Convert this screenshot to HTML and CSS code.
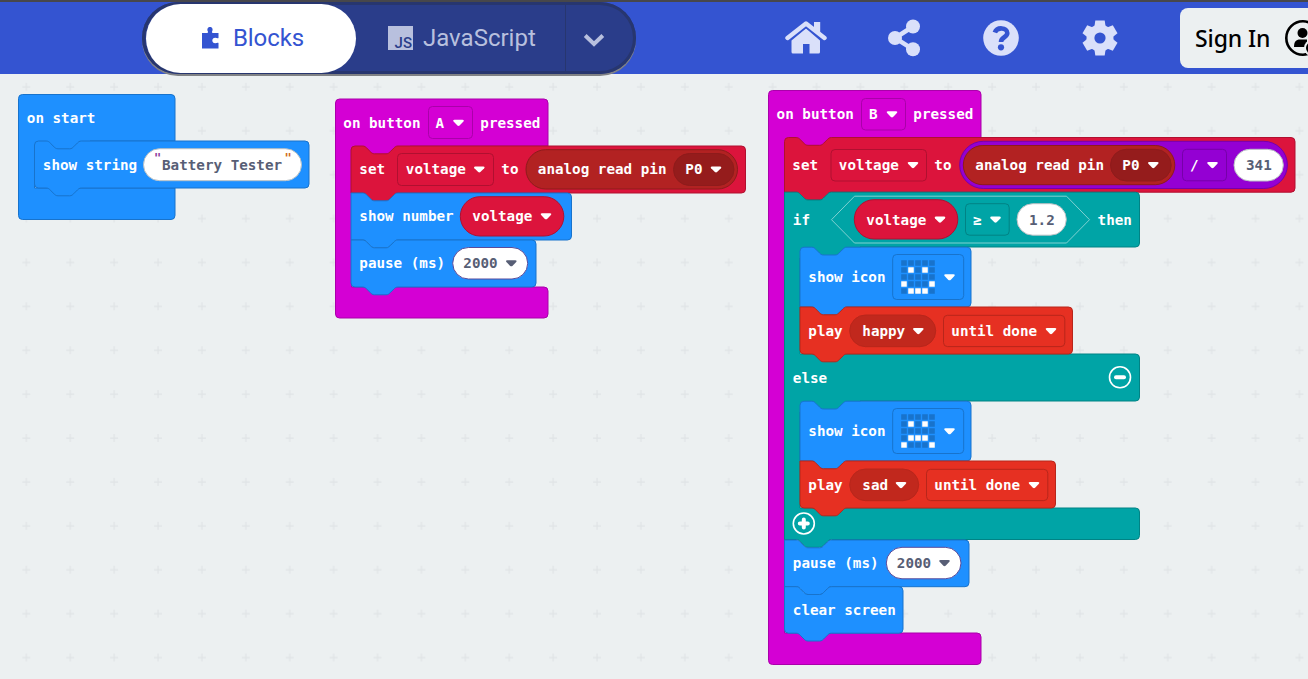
FILE: index.html
```html
<!DOCTYPE html>
<html lang="en">
<head>
<meta charset="utf-8">
<title>Blocks editor</title>
<link rel="stylesheet" href="styles.css">
</head>
<body>
<div class="app">
<header class="topbar">
  <div class="toggle">
    <button class="tab tab-active">
      <svg class="puzzle" viewBox="0 0 17 22"><path d="M0 6H5.500C6 5.500 6.200 5 5.800 4.300C4.700 2 6 0 8 0S11.300 2 10.200 4.300C9.800 5 10 5.500 10.500 6H16.500V11C15.500 11.700 14.500 10.700 13.300 10.700C9.300 10.700 9.300 16.300 13.300 16.300C14.500 16.300 15.500 15.300 16.500 16V21.500H0Z"/></svg>
      <span class="blocks-label">Blocks</span>
    </button>
    <button class="tab tab-js"><span class="js-badge">JS</span><span class="js-label">JavaScript</span></button>
    <button class="tab tab-more"><svg viewBox="0 0 22 14" width="22" height="14"><path d="M2.200 2.500 11 11 19.800 2.500" fill="none" stroke="#b8c0de" stroke-width="4"/></svg></button>
  </div>
  <nav class="tools">
    <svg class="tool" viewBox="0 0 42 36" width="42" height="36"><path d="M21 8.500 35 20.500V32Q35 33.500 33.500 33.500H24.500V24H18V33.500H8Q6.500 33.500 6.500 32V20.500Z"/><path d="M2.500 18 21 3.500 39.500 18" fill="none" stroke="#3454d1" stroke-width="7"/><path d="M2.500 18 21 3.500 39.500 18" fill="none" stroke="#dae0fa" stroke-width="4.400" stroke-linecap="round" stroke-linejoin="round"/><path d="M29 2H35.200V15L29 10Z"/></svg>
    <svg class="tool" viewBox="0 0 34 38" width="34" height="38"><circle cx="8" cy="19" r="7"/><circle cx="26" cy="7.500" r="7"/><circle cx="26" cy="30.300" r="7"/><path d="M26 7.500 8 19 26 30.300" fill="none" stroke="#dae0fa" stroke-width="4.500"/></svg>
    <svg class="tool" viewBox="0 0 36 36" width="36" height="36"><circle cx="18" cy="18" r="17.800"/><path d="M11.800 12.500C14 6.500 24.300 7.500 24.300 13C24.300 17.500 18 17 18 22" fill="none" stroke="#3454d1" stroke-width="4.600"/><circle cx="18" cy="27.300" r="3.100" fill="#3454d1"/></svg>
    <svg class="tool" viewBox="-18 -18 36 36" width="36" height="36"><circle r="13.500"/><g><path id="tooth" d="M-5.500-12 -4.700-17.500H4.700L5.500-12V0H-5.500Z"/><use href="#tooth" transform="rotate(60)"/><use href="#tooth" transform="rotate(120)"/><use href="#tooth" transform="rotate(180)"/><use href="#tooth" transform="rotate(240)"/><use href="#tooth" transform="rotate(300)"/></g><circle r="5.600" fill="#3454d1"/></svg>
  </nav>
  <button class="signin"><span>Sign In</span>
    <svg viewBox="0 0 38 38" width="38" height="38"><circle cx="19" cy="19" r="16.700" fill="none" stroke="#000" stroke-width="2.600"/><circle cx="18.500" cy="14" r="5"/><path d="M10 28C10 22.500 12 20.500 16 20.500H23V28Z"/><circle cx="28" cy="29" r="8" fill="#ecf0f1"/><circle cx="28" cy="29" r="6"/></svg>
  </button>
</header>
<main class="workspace">
<svg class="canvas" viewBox="0 74 1308 605" width="1308" height="605">
  <defs>
    <pattern id="grid" x="4.350" y="64.850" width="43.900" height="43.900" patternUnits="userSpaceOnUse"><path d="M18 22H26M22 18V26" stroke="#e0e4e6" stroke-width="1.200"/></pattern>
    <path id="arrow" d="M-4 -3H4Q6 -2.800 4.900 -1.200L1.100 2.700Q0 3.600-1.100 2.700L-4.900-1.200Q-6-2.800-4-3Z"/>
    <g id="leds" class="led"><path d="M0 0h33.600M0 7h33.600M0 14h33.600M0 21h33.600M0 28h33.600" stroke-width="5.600" stroke-dasharray="5.600 1.400"/></g>
  </defs>
  <rect y="74" width="1308" height="605" fill="url(#grid)"/>

  <!-- on start -->
  <path class="blue" d="M18.500 98.500q0-4 4-4H171q4 0 4 4V141H90V152H34.500V188H175V215.500q0 4-4 4H22.500q-4 0-4-4Z"/>
  <text x="26.800" y="123">on start</text>
  <g transform="translate(34.500 141)"><path class="blue" d="M0 4q0-4 4-4H11.700c2 0 3 1 4 2l3.800 3.800c1 1 2 2 4 2h11.600c2 0 3-1 4-2l3.800-3.800c1-1 2-2 4-2H270.500q4 0 4 4V43q0 4-4 4H46.900c-2 0-3 1-4 2l-3.800 3.800c-1 1-2 2-4 2h-11.600c-2 0-3-1-4-2l-3.800-3.800c-1-1-2-2-4-2H4q-4 0-4-4Z"/></g>
  <text x="42.800" y="170">show string</text>
  <rect class="value" x="143.500" y="148.700" width="158" height="32" rx="16"/>
  <text class="quote q1" x="154" y="162">"</text><text class="dark" x="162" y="170">Battery Tester</text><text class="quote q2" x="284.500" y="162">"</text>

  <!-- on button A pressed -->
  <path class="magenta" d="M335.500 103q0-4 4-4H544q4 0 4 4V146H410V157H351.500V287H544q4 0 4 4V314q0 4-4 4H339.500q-4 0-4-4Z"/>
  <text x="343.300" y="128">on button</text><rect class="magenta" x="428.500" y="106.500" width="44" height="32" rx="4"/><text x="435.500" y="128">A</text><use href="#arrow" x="458.500" y="122.800"/><text x="480.300" y="128">pressed</text>
  <g transform="translate(351 146)"><path class="red" d="M0 4q0-4 4-4H11.700c2 0 3 1 4 2l3.800 3.800c1 1 2 2 4 2h11.600c2 0 3-1 4-2l3.800-3.800c1-1 2-2 4-2H390.500q4 0 4 4V43q0 4-4 4H46.900c-2 0-3 1-4 2l-3.800 3.800c-1 1-2 2-4 2h-11.600c-2 0-3-1-4-2l-3.800-3.800c-1-1-2-2-4-2H0Z"/></g>
  <text x="359.300" y="174">set</text><rect class="red" x="397.500" y="153.500" width="96" height="32" rx="4"/><text x="405.800" y="174">voltage</text><use href="#arrow" x="479.300" y="169.400"/><text x="501.300" y="174">to</text>
  <rect class="pin" x="526" y="149.700" width="211.500" height="39.300" rx="19.600"/><text x="537.800" y="174">analog read pin</text><rect class="pinfield" x="673.500" y="153.500" width="60.500" height="32" rx="16"/><text x="685.300" y="174">P0</text><use href="#arrow" x="716" y="169.400"/>
  <g transform="translate(351 193)"><path class="blue" d="M0 0H11.700c2 0 3 1 4 2l3.800 3.800c1 1 2 2 4 2h11.600c2 0 3-1 4-2l3.800-3.800c1-1 2-2 4-2H216.500q4 0 4 4V43q0 4-4 4H46.900c-2 0-3 1-4 2l-3.800 3.800c-1 1-2 2-4 2h-11.600c-2 0-3-1-4-2l-3.800-3.800c-1-1-2-2-4-2H0Z"/></g>
  <text x="359.300" y="221">show number</text><rect class="red" x="460.300" y="196.700" width="103.500" height="39.300" rx="19.600"/><text x="472.300" y="221">voltage</text><use href="#arrow" x="546" y="216.200"/>
  <g transform="translate(351 240)"><path class="blue" d="M0 0H11.700c2 0 3 1 4 2l3.800 3.800c1 1 2 2 4 2h11.600c2 0 3-1 4-2l3.800-3.800c1-1 2-2 4-2H181q4 0 4 4V43q0 4-4 4H46.900c-2 0-3 1-4 2l-3.800 3.800c-1 1-2 2-4 2h-11.600c-2 0-3-1-4-2l-3.800-3.800c-1-1-2-2-4-2H4q-4 0-4-4Z"/></g>
  <text x="359.300" y="268">pause (ms)</text><rect class="value number" x="452.700" y="247.500" width="75" height="31.500" rx="15.700"/><text class="dark" x="463.300" y="268">2000</text><use class="dark" href="#arrow" x="511.300" y="263.200"/>

  <!-- on button B pressed -->
  <path class="magenta" d="M768.500 94.500q0-4 4-4H977q4 0 4 4V137.500H850V149H784.500V633H977q4 0 4 4V660.500q0 4-4 4H772.500q-4 0-4-4Z"/>
  <text x="776.600" y="119">on button</text><rect class="magenta" x="861.500" y="98.500" width="44" height="31.500" rx="4"/><text x="869" y="119">B</text><use href="#arrow" x="892" y="114.300"/><text x="913.300" y="119">pressed</text>
  <g transform="translate(784.500 137.500)"><path class="red" d="M0 4q0-4 4-4H11.700c2 0 3 1 4 2l3.800 3.800c1 1 2 2 4 2h11.600c2 0 3-1 4-2l3.800-3.800c1-1 2-2 4-2H506.500q4 0 4 4V50.700q0 4-4 4H46.900c-2 0-3 1-4 2l-3.800 3.800c-1 1-2 2-4 2h-11.600c-2 0-3-1-4-2l-3.800-3.800c-1-1-2-2-4-2H0Z"/></g>
  <text x="792.300" y="170">set</text><rect class="red" x="831" y="149.500" width="95.500" height="31.500" rx="4"/><text x="838.800" y="170">voltage</text><use href="#arrow" x="913" y="165"/><text x="934.300" y="170">to</text>
  <rect class="purple" x="959.700" y="141.300" width="327.700" height="47.200" rx="23.600"/><rect class="pin" x="963.300" y="145.500" width="211.500" height="39.200" rx="19.600"/><text x="975.300" y="170">analog read pin</text><rect class="pinfield" x="1110.500" y="149.300" width="60.700" height="31.700" rx="15.800"/><text x="1122.300" y="170">P0</text><use href="#arrow" x="1153.300" y="165"/>
  <rect class="purple" x="1182.500" y="149.300" width="44" height="31.500" rx="4"/><text x="1190" y="170">/</text><use href="#arrow" x="1212.500" y="165"/><rect class="value" x="1234" y="149.300" width="49.300" height="31.700" rx="15.800"/><text class="dark" x="1246" y="170">341</text>

  <path class="teal" d="M784.500 192.200H796.200c2 0 3 1 4 2l3.800 3.800c1 1 2 2 4 2h11.600c2 0 3-1 4-2l3.800-3.800c1-1 2-2 4-2H1135.500q4 0 4 4V243q0 4-4 4H860V258H800V354H1135.500q4 0 4 4V397q0 4-4 4H860V412H800V508H1135.500q4 0 4 4V535.500q0 4-4 4H831.400c-2 0-3 1-4 2l-3.800 3.800c-1 1-2 2-4 2h-11.600c-2 0-3-1-4-2l-3.800-3.800c-1-1-2-2-4-2H784.500Z"/>
  <text x="792.800" y="225">if</text><path class="hex" d="M831.500 219.700 854.500 196.200H1066.500L1089.500 219.700 1066.500 243H854.500Z"/>
  <rect class="red" x="854.300" y="199.700" width="103.500" height="39.300" rx="19.600"/><text x="866.300" y="225">voltage</text><use href="#arrow" x="940" y="219.600"/><rect class="teal" x="965.500" y="203.700" width="43.700" height="31.500" rx="4"/><text x="973" y="225">≥</text><use href="#arrow" x="995.500" y="219.600"/><rect class="value" x="1017" y="203.700" width="49.300" height="31.500" rx="15.700"/><text class="dark" x="1029" y="225">1.2</text><text x="1097.600" y="225">then</text>

  <g id="showicon"><g transform="translate(800 247.200)"><path class="blue" d="M0 4q0-4 4-4H11.700c2 0 3 1 4 2l3.800 3.800c1 1 2 2 4 2h11.600c2 0 3-1 4-2l3.800-3.800c1-1 2-2 4-2H167q4 0 4 4V55.700q0 4-4 4H46.900c-2 0-3 1-4 2l-3.800 3.800c-1 1-2 2-4 2h-11.600c-2 0-3-1-4-2l-3.800-3.800c-1-1-2-2-4-2H0Z"/></g><text x="808.300" y="282">show icon</text><rect class="blue" x="892.700" y="254.500" width="71" height="45" rx="4"/><use href="#leds" x="901.200" y="263"/><use href="#arrow" x="949.500" y="277.200"/></g>
  <path class="lit" d="M908.200 270h5.600M922.200 270h5.600M901.200 284h5.600M929.200 284h5.600M908.200 291h5.600M915.200 291h5.600M922.200 291h5.600"/>
  <g transform="translate(800 307)"><path class="play" d="M0 0H11.700c2 0 3 1 4 2l3.800 3.800c1 1 2 2 4 2h11.600c2 0 3-1 4-2l3.800-3.800c1-1 2-2 4-2H268.500q4 0 4 4V43q0 4-4 4H46.900c-2 0-3 1-4 2l-3.800 3.800c-1 1-2 2-4 2h-11.600c-2 0-3-1-4-2l-3.800-3.800c-1-1-2-2-4-2H4q-4 0-4-4Z"/></g>
  <text x="808.300" y="336">play</text><rect class="playfield" x="849.700" y="315" width="86" height="31.700" rx="15.800"/><text x="862.300" y="336">happy</text><use href="#arrow" x="918.300" y="331"/><rect class="play" x="943.500" y="315.300" width="121.300" height="31.300" rx="4"/><text x="951.300" y="336">until done</text><use href="#arrow" x="1051" y="331"/>
  <text x="792.800" y="383">else</text><circle class="round" cx="1120" cy="377.300" r="10.500"/><path class="mark" d="M1116 377.300h8"/>

  <use href="#showicon" y="154"/>
  <path class="lit" d="M908.200 424h5.600M922.200 424h5.600M908.200 438h5.600M915.200 438h5.600M922.200 438h5.600M901.200 445h5.600M929.200 445h5.600"/>
  <g transform="translate(800 461)"><path class="play" d="M0 0H11.700c2 0 3 1 4 2l3.800 3.800c1 1 2 2 4 2h11.600c2 0 3-1 4-2l3.800-3.800c1-1 2-2 4-2H251.500q4 0 4 4V43q0 4-4 4H46.900c-2 0-3 1-4 2l-3.800 3.800c-1 1-2 2-4 2h-11.600c-2 0-3-1-4-2l-3.800-3.800c-1-1-2-2-4-2H4q-4 0-4-4Z"/></g>
  <text x="808.300" y="490">play</text><rect class="playfield" x="849.700" y="469" width="69" height="31.700" rx="15.800"/><text x="862.300" y="490">sad</text><use href="#arrow" x="901" y="485"/><rect class="play" x="926.500" y="469.300" width="121.300" height="31.300" rx="4"/><text x="934.300" y="490">until done</text><use href="#arrow" x="1034" y="485"/>
  <circle class="round" cx="803.800" cy="523.500" r="10.500"/><path class="mark" d="M799.800 523.500h8M803.800 519.500v8"/>

  <g transform="translate(784.500 540)"><path class="blue" d="M0 0H11.700c2 0 3 1 4 2l3.800 3.800c1 1 2 2 4 2h11.600c2 0 3-1 4-2l3.800-3.800c1-1 2-2 4-2H180.500q4 0 4 4V42.700q0 4-4 4H46.900c-2 0-3 1-4 2l-3.800 3.800c-1 1-2 2-4 2h-11.600c-2 0-3-1-4-2l-3.800-3.800c-1-1-2-2-4-2H0Z"/></g>
  <text x="792.800" y="568">pause (ms)</text><rect class="value number" x="886.300" y="547.300" width="74.700" height="31.500" rx="15.700"/><text class="dark" x="896.800" y="568">2000</text><use class="dark" href="#arrow" x="944.500" y="563"/>
  <g transform="translate(784.500 586.700)"><path class="blue" d="M0 0H11.700c2 0 3 1 4 2l3.800 3.800c1 1 2 2 4 2h11.600c2 0 3-1 4-2l3.800-3.800c1-1 2-2 4-2H114.500q4 0 4 4V42.500q0 4-4 4H46.900c-2 0-3 1-4 2l-3.800 3.800c-1 1-2 2-4 2h-11.600c-2 0-3-1-4-2l-3.800-3.800c-1-1-2-2-4-2H4q-4 0-4-4Z"/></g>
  <text x="792.800" y="615">clear screen</text>
</svg>
</main>
</div>
</body>
</html>
```
FILE: styles.css
```css
* { box-sizing: border-box; }
body { margin: 0; background: #ecf0f1; }
.app { width: 1308px; height: 679px; overflow: hidden; display: flex; flex-direction: column; }
.topbar { height: 74px; flex: none; display: flex; background: #3454d1; border-top: 2px solid #47474b; padding-left: 142px; z-index: 1; }
button { border: 0; margin: 0; padding: 0; background: none; }
.toggle { display: flex; flex: none; width: 494px; height: 72px; padding: 2px 4px 1px; border-radius: 37px; background: #2a3d8a; box-shadow: inset 0 0 0 3px #27366f, 0 2px 0 #808285; clip-path: inset(0 0 -3px 0); }
.tab { display: flex; align-items: center; font-family: Roboto, sans-serif; font-size: 24px; color: #b8c0de; padding-bottom: 2px; }
.tab-active { width: 210px; height: 69px; border-radius: 35px; background: #fff; color: #3454d1; padding-left: 56px; }
.puzzle { width: 17px; height: 22px; fill: #3454d1; margin-right: 14px; }
.blocks-label { letter-spacing: -0.1px; }
.tab-js { width: 209px; padding-left: 32px; }
.js-badge { width: 25px; height: 24px; background: #b8c0de; color: #2a3d8a; font-size: 15px; line-height: 14px; font-weight: 500; padding: 10px 1px 0 0; text-align: right; margin-right: 10px; }
.tab-more { flex: 1; padding: 3px 0 0 17px; border-left: 1px solid #27366f; }
.tools { display: flex; align-items: center; width: 544px; padding: 0 0 1px 148.500px; flex: none; }
.tool { fill: #dae0fa; flex: none; display: block; }
.tool:nth-child(1) { margin-right: 60.5px; }
.tool:nth-child(2) { margin-right: 62px; }
.tool:nth-child(3) { margin-right: 63px; }
.signin { width: 150px; height: 60px; margin-top: 6px; border-radius: 8px; background: #ecf0f1; color: #000; display: flex; align-items: center; gap: 14px; padding: 0 0 1px 15px; flex: none; font: 500 23px "Noto Sans", sans-serif; letter-spacing: -0.1px; white-space: nowrap; }
.workspace { flex: 1; }
.canvas { display: block; }
.canvas text { font: bold 14.25px "DejaVu Sans Mono", monospace; fill: #fff; white-space: pre; }
.canvas use { fill: #fff; }
.blue { fill: #1e90ff; stroke: #1873cc; }
.magenta { fill: #d400d4; stroke: #aa00aa; }
.red { fill: #dc143c; stroke: #b01030; }
.pin { fill: #b22222; stroke: #8e1b1b; }
.pinfield { fill: #951c1c; stroke: #8e1b1b; }
.purple { fill: #9400d3; stroke: #7600a9; }
.teal { fill: #00a4a6; stroke: #008385; }
.play { fill: #e63022; stroke: #b8261b; }
.playfield { fill: #c1281d; stroke: #b8261b; }
.value { fill: #fff; stroke: #b9c0c4; }
.number { stroke: #5a4b9a; }
.canvas .dark { fill: #575e75; }
.canvas .quote { font-size: 12px; }
.canvas .q1 { fill: #8e3a9c; }
.canvas .q2 { fill: #d06a20; }
.hex { fill: none; stroke: #80d1d2; }
.led { stroke: #1873cc; }
.lit { stroke: #fff; stroke-width: 5.6; }
.round { fill: none; stroke: #fff; stroke-width: 1.6; }
.mark { stroke: #fff; stroke-width: 4; stroke-linecap: round; }
```
